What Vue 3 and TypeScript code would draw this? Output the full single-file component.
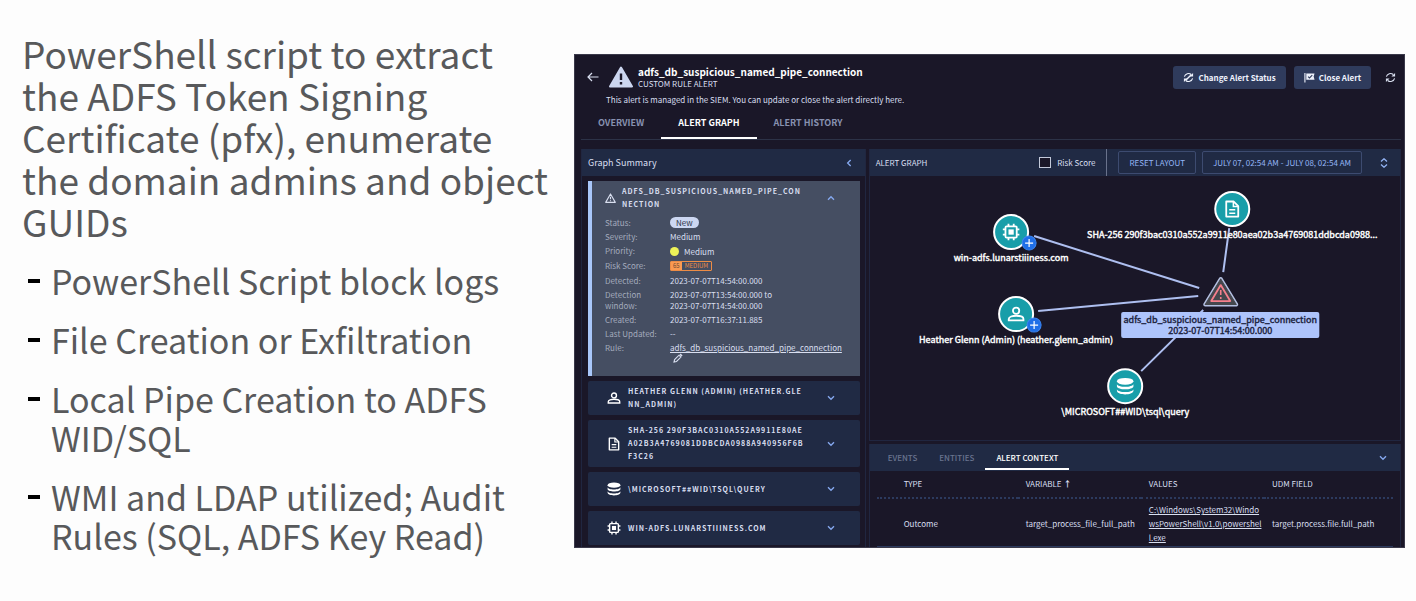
<script setup lang="ts">
import { ref } from 'vue'

type IconName = 'person' | 'doc' | 'db' | 'chip'

interface Detail {
  label: string
  value: string
  kind?: 'pill' | 'dot' | 'risk' | 'link'
}

interface Entity {
  icon: IconName
  title: string
}

interface GraphNode {
  icon: IconName
  x: number
  y: number
  label: string
  expandable: boolean
}

const bullets: string[] = [
  'PowerShell Script block logs',
  'File Creation or Exfiltration',
  'Local Pipe Creation to ADFS WID/SQL',
  'WMI and LDAP utilized; Audit Rules (SQL, ADFS Key Read)',
]

const tabs: string[] = ['OVERVIEW', 'ALERT GRAPH', 'ALERT HISTORY']
const contextTabs: string[] = ['EVENTS', 'ENTITIES', 'ALERT CONTEXT']
const activeTab = ref('ALERT GRAPH')
const activeContext = ref('ALERT CONTEXT')
const showRisk = ref(false)

const details: Detail[] = [
  { label: 'Status:', value: 'New', kind: 'pill' },
  { label: 'Severity:', value: 'Medium' },
  { label: 'Priority:', value: 'Medium', kind: 'dot' },
  { label: 'Risk Score:', value: 'MEDIUM', kind: 'risk' },
  { label: 'Detected:', value: '2023-07-07T14:54:00.000' },
  { label: 'Detection window:', value: '2023-07-07T13:54:00.000 to\n2023-07-07T14:54:00.000' },
  { label: 'Created:', value: '2023-07-07T16:37:11.885' },
  { label: 'Last Updated:', value: '--' },
  { label: 'Rule:', value: 'adfs_db_suspicious_named_pipe_connection', kind: 'link' },
]

const entities: Entity[] = [
  { icon: 'person', title: 'HEATHER GLENN (ADMIN) (HEATHER.GLENN_ADMIN)' },
  { icon: 'doc', title: 'SHA-256 290F3BAC0310A552A9911E80AEA02B3A4769081DDBCDA0988A940956F6BF3C26' },
  { icon: 'db', title: '\\MICROSOFT##WID\\TSQL\\QUERY' },
  { icon: 'chip', title: 'WIN-ADFS.LUNARSTIIINESS.COM' },
]

const nodes: GraphNode[] = [
  { icon: 'chip', x: 142, y: 56, label: 'win-adfs.lunarstiiiness.com', expandable: true },
  { icon: 'person', x: 147, y: 138, label: 'Heather Glenn (Admin) (heather.glenn_admin)', expandable: true },
  { icon: 'db', x: 256, y: 210, label: '\\MICROSOFT##WID\\tsql\\query', expandable: false },
  { icon: 'doc', x: 363, y: 33, label: 'SHA-256 290f3bac0310a552a9911e80aea02b3a4769081ddbcda0988...', expandable: false },
]
</script>

<template>
  <main class="slide">
    <section class="notes">
      <h1>PowerShell script to extract the ADFS Token Signing Certificate (pfx), enumerate the domain admins and object GUIDs</h1>
      <ul>
        <li v-for="b in bullets" :key="b">{{ b }}</li>
      </ul>
    </section>

    <section class="app">
      <svg class="defs" aria-hidden="true">
        <symbol id="i-person" viewBox="0 0 24 24">
          <circle cx="12" cy="7.5" r="4.2" fill="none" stroke="currentColor" stroke-width="2.4" />
          <path d="M2.2 20.5v-2c0-3 5-4.3 9.8-4.3s9.8 1.3 9.8 4.3v2z" fill="none" stroke="currentColor" stroke-width="2.4" />
        </symbol>
        <symbol id="i-doc" viewBox="0 0 24 24">
          <path d="M4 2h10l6 6v14H4z" fill="none" stroke="currentColor" stroke-width="2.4" stroke-linejoin="round" />
          <path d="M13.5 2v6.5H20M8 13h8M8 17.5h8" fill="none" stroke="currentColor" stroke-width="2" />
        </symbol>
        <symbol id="i-db" viewBox="0 0 24 24">
          <ellipse cx="12" cy="5.5" rx="11" ry="4.5" fill="currentColor" />
          <path d="M1 9c1 5 21 5 22 0v3.5c-1 5-21 5-22 0z" fill="currentColor" />
          <path d="M1 16c1 5 21 5 22 0v2.5c-1 6-21 6-22 0z" fill="currentColor" />
        </symbol>
        <symbol id="i-chip" viewBox="0 0 24 24">
          <rect x="4.5" y="4.5" width="15" height="15" rx="1.5" fill="none" stroke="currentColor" stroke-width="2.4" />
          <rect x="8.5" y="8.5" width="7" height="7" fill="currentColor" />
          <path d="M8.5 1v3M15.5 1v3M8.5 20v3M15.5 20v3M1 8.5h3M1 15.5h3M20 8.5h3M20 15.5h3" stroke="currentColor" stroke-width="2.4" />
        </symbol>
        <symbol id="i-refresh" viewBox="0 0 24 24">
          <path d="M3 10a9.3 9.3 0 0 1 15-4.500M21 14a9.3 9.3 0 0 1-15 4.500" fill="none" stroke="currentColor" stroke-width="2.4" />
          <path d="M22 2v8h-8zM2 22v-8h8z" fill="currentColor" />
        </symbol>
        <symbol id="i-chev" viewBox="0 0 12 12">
          <path d="M1.5 3.5 6 8l4.500-4.500" fill="none" stroke="currentColor" stroke-width="2" />
        </symbol>
      </svg>

      <header class="top">
        <button class="bare back" type="button" aria-label="Back">
          <svg viewBox="0 0 12 10"><path d="M11.5 5H1M5 1 1 5l4 4" fill="none" stroke="currentColor" stroke-width="1.2" /></svg>
        </button>
        <svg class="warn" viewBox="0 0 24 22">
          <path d="M12 1.5 23 20.5H1z" fill="#ccd6f0" stroke="#ccd6f0" stroke-width="2" stroke-linejoin="round" />
          <path d="M12 7.5v6.5M12 16v2.4" stroke="#1a1728" stroke-width="2.4" />
        </svg>
        <div class="names">
          <h2>adfs_db_suspicious_named_pipe_connection</h2>
          <p>CUSTOM RULE ALERT</p>
        </div>
        <div class="actions">
          <button class="solid" type="button"><svg viewBox="0 0 24 24"><use href="#i-refresh" /><path d="M6 18 18 6" stroke="currentColor" stroke-width="3" /></svg>Change Alert Status</button>
          <button class="solid" type="button">
            <svg viewBox="0 0 24 24"><path d="M2 2v21" stroke="currentColor" stroke-width="2.4" /><path d="M5 3h18l-2 7 2 7H5z" fill="currentColor" /><path d="m9 10 3 3 6-6" fill="none" stroke="#2f3b5c" stroke-width="2.4" /></svg>Close Alert
          </button>
          <button class="bare reload" type="button" aria-label="Refresh"><svg viewBox="0 0 24 24"><use href="#i-refresh" /></svg></button>
        </div>
      </header>
      <p class="hint">This alert is managed in the SIEM. You can update or close the alert directly here.</p>

      <nav class="tabs">
        <button v-for="t in tabs" :key="t" type="button" :class="{ on: t === activeTab }" @click="activeTab = t">{{ t }}</button>
      </nav>

      <div class="body">
        <aside class="summary">
          <div class="bar">
            <h3>Graph Summary</h3>
            <button class="bare chev left" type="button" aria-label="Collapse summary"><svg viewBox="0 0 12 12"><use href="#i-chev" /></svg></button>
          </div>
          <div class="cards">
            <article class="card open">
              <div class="card-head">
                <svg class="tri" viewBox="0 0 12 11"><path d="M6 1 11.3 10.3H.7z" fill="none" stroke="currentColor" stroke-width="1.2" stroke-linejoin="round" /><path d="M6 4v3M6 8v1.2" stroke="currentColor" stroke-width="1.2" /></svg>
                <h4>ADFS_DB_SUSPICIOUS_NAMED_PIPE_CONNECTION</h4>
                <button class="bare chev up" type="button" aria-label="Collapse"><svg viewBox="0 0 12 12"><use href="#i-chev" /></svg></button>
              </div>
              <dl>
                <template v-for="d in details" :key="d.label">
                  <dt>{{ d.label }}</dt>
                  <dd>
                    <span v-if="d.kind === 'pill'" class="pill">{{ d.value }}</span>
                    <span v-else-if="d.kind === 'dot'" class="prio"><i></i>{{ d.value }}</span>
                    <span v-else-if="d.kind === 'risk'" class="risk"><b>65</b><span>{{ d.value }}</span></span>
                    <template v-else-if="d.kind === 'link'">
                      <a href="#">{{ d.value }}</a>
                      <svg class="pencil" viewBox="0 0 10 10"><path d="M1 9l.6-2.500L6 2.200l1.900 1.900-4.400 4.400z" fill="none" stroke="currentColor" stroke-width="1.1" /><path d="M6.5 1.7 7.7.5l1.900 1.900-1.200 1.200z" fill="currentColor" /></svg>
                    </template>
                    <span v-else class="plain">{{ d.value }}</span>
                  </dd>
                </template>
              </dl>
            </article>
            <article v-for="e in entities" :key="e.title" class="card">
              <div class="card-head">
                <svg class="ent" viewBox="0 0 24 24"><use :href="'#i-' + e.icon" /></svg>
                <h4>{{ e.title }}</h4>
                <button class="bare chev" type="button" aria-label="Expand"><svg viewBox="0 0 12 12"><use href="#i-chev" /></svg></button>
              </div>
            </article>
          </div>
        </aside>

        <div class="main">
          <section class="graph">
            <div class="bar">
              <h3 class="caps">ALERT GRAPH</h3>
              <label class="check"><input v-model="showRisk" type="checkbox" />Risk Score</label>
              <div class="tools">
                <button class="line" type="button">RESET LAYOUT</button>
                <button class="line" type="button">JULY 07, 02:54 AM - JULY 08, 02:54 AM</button>
                <button class="bare updown" type="button" aria-label="Resize"><svg viewBox="0 0 8 10"><path d="M1 3.5 4 .8l3 2.700M1 6.500l3 2.700 3-2.700" fill="none" stroke="currentColor" stroke-width="1.3" /></svg></button>
              </div>
            </div>
            <svg class="canvas" viewBox="1 0 530 264" role="img" aria-label="Alert graph">
              <g stroke="#aebff0" stroke-width="2">
                <path d="M165 60 330 112M169 135 329 120M360 52 354 96M334 134 272 195" />
              </g>
              <g v-for="n in nodes" :key="n.label">
                <circle :cx="n.x" :cy="n.y" r="17" fill="#189ea9" stroke="#fff" stroke-width="2" />
                <svg :x="n.x - 9" :y="n.y - 9" width="18" height="18" color="#fff"><use :href="'#i-' + n.icon" /></svg>
                <g v-if="n.expandable">
                  <circle :cx="n.x + 18" :cy="n.y + 11" r="7" fill="#1f6fe8" stroke="#3c84f0" />
                  <path :d="`M${n.x + 14} ${n.y + 11}h8M${n.x + 18} ${n.y + 7}v8`" stroke="#fff" stroke-width="1.2" />
                </g>
                <text :x="n.x" :y="n.y + 29">{{ n.label }}</text>
              </g>
              <path d="M351.5 103 367 128.5H336z" fill="#45474d" stroke="#b4c0e2" stroke-width="4" stroke-linejoin="round" />
              <path d="M351.5 103 367 128.5H336z" fill="#45474d" stroke="#45474d" stroke-width="1" stroke-linejoin="round" />
              <path d="M351.5 109 361 125H342z" fill="none" stroke="#f57f8c" stroke-width="1.8" stroke-linejoin="round" />
              <path d="M351.5 114v5M351.5 121v2" stroke="#f57f8c" stroke-width="1.6" />
              <rect x="252" y="136" width="198" height="26" rx="2" fill="#aec4fb" />
              <text class="dark" x="351" y="147">adfs_db_suspicious_named_pipe_connection</text>
              <text class="dark" x="351" y="158">2023-07-07T14:54:00.000</text>
            </svg>
          </section>

          <section class="context">
            <div class="bar">
              <nav class="subtabs">
                <button v-for="t in contextTabs" :key="t" type="button" :class="{ on: t === activeContext }" @click="activeContext = t">{{ t }}</button>
              </nav>
              <button class="bare chev" type="button" aria-label="Collapse context"><svg viewBox="0 0 12 12"><use href="#i-chev" /></svg></button>
            </div>
            <table>
              <thead>
                <tr><th>TYPE</th><th>VARIABLE <b>↑</b></th><th>VALUES</th><th>UDM FIELD</th></tr>
              </thead>
              <tbody>
                <tr>
                  <td>Outcome</td>
                  <td>target_process_file_full_path</td>
                  <td><a href="#">C:\Windows\System32\WindowsPowerShell\v1.0\powershell.exe</a></td>
                  <td>target.process.file.full_path</td>
                </tr>
              </tbody>
            </table>
          </section>
        </div>
      </div>
    </section>
  </main>
</template>

<style>
body {
  background: #fdfdfd;
}
</style>

<style scoped>
* {
  box-sizing: border-box;
  margin: 0;
  padding: 0;
}
.slide {
  display: grid;
  grid-template-columns: 574fr 831fr;
  align-items: start;
  padding-right: 11px;
  font-family: "Noto Sans CJK SC", "Noto Sans", sans-serif;
}
.notes {
  padding: 32px 20px 0 22px;
  color: #58595b;
}
h1 {
  font-size: 37px;
  line-height: 42px;
  font-weight: 400;
}
.notes ul {
  list-style: none;
  margin-top: 19px;
  padding-left: 29px;
}
.notes li {
  position: relative;
  font-size: 34px;
  line-height: 39px;
  margin-bottom: 20px;
}
.notes li::before {
  content: "";
  position: absolute;
  left: -23px;
  top: 18px;
  width: 12px;
  height: 4px;
  background: #000;
}
.app {
  margin-top: 54px;
  background: #1a1728;
  color: #d9dff0;
  border: 1px solid #3a394a;
  overflow: hidden;
  padding: 0 3px 0 6px;
  font-size: 8px;
  line-height: 11px;
}
.defs {
  position: absolute;
  width: 0;
  height: 0;
}
button {
  font: inherit;
  color: inherit;
  border: 0;
  background: none;
  cursor: pointer;
  white-space: nowrap;
}
svg {
  display: block;
  flex: none;
}
.top {
  display: flex;
  align-items: center;
  height: 24px;
  margin-top: 10px;
  padding-left: 6px;
}
.back {
  width: 12px;
  margin-right: 10px;
}
.warn {
  width: 24px;
  height: 22px;
  margin-right: 5px;
}
.names h2 {
  font-size: 10px;
  line-height: 14px;
  font-weight: 700;
  color: #fff;
}
.names p {
  line-height: 10px;
}
.actions {
  display: flex;
  align-items: center;
  gap: 8px;
  margin-left: auto;
  padding-right: 5px;
}
.solid {
  display: flex;
  align-items: center;
  gap: 4px;
  height: 23px;
  padding: 0 10px;
  border-radius: 3px;
  background: #2f3b5c;
  color: #eef2fc;
  font-weight: 700;
}
.solid svg,
.reload svg {
  width: 11px;
  height: 11px;
}
.reload {
  margin-left: 6px;
}
.hint {
  margin: 5px 0 0 25px;
  line-height: 12px;
}
.tabs {
  display: flex;
  height: 34px;
  border-bottom: 1px solid #2c3247;
}
.tabs button {
  padding: 2px 17px 0;
  font-size: 9px;
  font-weight: 700;
  color: #8791b0;
  border-bottom: 2px solid transparent;
}
.tabs button.on,
.subtabs button.on {
  color: #fff;
  border-color: #fff;
}
.body {
  display: grid;
  grid-template-columns: 285fr 533fr;
  gap: 3px;
  margin-top: 9px;
}
.bar {
  display: flex;
  align-items: center;
  height: 27px;
  background: #202a44;
}
.bar h3 {
  font-size: 9px;
  font-weight: 400;
  padding-left: 6px;
}
.bar h3.caps {
  font-size: 8px;
}
.chev {
  color: #86a9f0;
  width: 8px;
  height: 8px;
}
.chev svg {
  width: 8px;
  height: 8px;
}
.left {
  margin-left: auto;
  margin-right: 12px;
  transform: rotate(90deg);
}
.up {
  transform: rotate(180deg);
}
.summary,
.main {
  min-width: 0;
}
.summary {
  border: solid #202640;
  border-width: 0 1px;
}
.cards {
  display: flex;
  flex-direction: column;
  gap: 5px;
  padding: 5px 5px 1px 6px;
}
.card {
  background: #202a44;
  border-radius: 2px;
  padding: 4px 25px 4px 19px;
}
.card-head {
  display: flex;
  align-items: center;
  min-height: 26px;
}
.card h4 {
  flex: 1;
  min-width: 0;
  font-size: 7px;
  line-height: 13px;
  font-weight: 700;
  letter-spacing: 1px;
  word-break: break-all;
  margin-right: 20px;
}
.ent {
  width: 14px;
  height: 14px;
  margin-right: 7px;
  color: #fff;
}
.open {
  background: #454e62;
  border-left: 4px solid #a9c7fa;
  border-radius: 0;
  padding: 4px 25px 13px 13px;
}
.tri {
  width: 11px;
  height: 10px;
  margin-right: 6px;
}
dl {
  display: grid;
  grid-template-columns: 52px 1fr;
  column-gap: 13px;
  row-gap: 3px;
  margin-top: 6px;
}
dt {
  color: #a4abbd;
}
dd {
  min-width: 0;
}
.plain {
  white-space: pre;
}
.pill {
  display: inline-block;
  background: #ccd7f2;
  color: #2c3448;
  border-radius: 6px;
  padding: 0 6px;
}
.prio {
  display: flex;
  align-items: center;
  gap: 5px;
  height: 12px;
}
.prio i {
  width: 9px;
  height: 9px;
  border-radius: 50%;
  background: #edf258;
}
.risk {
  display: flex;
  width: fit-content;
  margin: 1px 0;
  border: 1px solid #ec8c46;
  border-radius: 1px;
  font-size: 6px;
  line-height: 8px;
  color: #ec8c46;
}
.risk b {
  background: #fb9a52;
  color: #704a34;
  font-weight: 400;
  padding: 0 2px;
}
.risk span {
  padding: 0 3px;
}
.pencil {
  width: 10px;
  height: 10px;
  margin-left: 3px;
}
a {
  color: inherit;
  text-decoration: underline;
}
.check {
  display: flex;
  align-items: center;
  gap: 6px;
  margin-left: auto;
  padding-right: 11px;
}
.check input {
  appearance: none;
  width: 12px;
  height: 11px;
  border: 1px solid #c3c9da;
  background: #1a1728;
}
.tools {
  display: flex;
  align-items: center;
  align-self: stretch;
  gap: 6px;
  border-left: 1px solid #69728c;
  padding: 0 12px 0 11px;
}
.line {
  height: 23px;
  padding: 0 10px;
  border: 1px solid #3d4b70;
  border-radius: 2px;
  color: #94b5f6;
}
.updown {
  margin-left: 12px;
  color: #94b5f6;
}
.updown svg {
  width: 8px;
  height: 10px;
}
.graph,
.context {
  border: 1px solid #202640;
  border-top: 0;
}
.canvas {
  width: 100%;
}
.canvas text {
  font-size: 9px;
  font-weight: 400;
  text-anchor: middle;
  fill: #fff;
  stroke: #fff;
  stroke-width: 0.4px;
}
.canvas text.dark {
  fill: #1c2340;
  stroke: #1c2340;
}
.context {
  margin-top: 3px;
  border-bottom: 0;
}
.context .chev {
  margin-left: auto;
  margin-right: 13px;
}
.subtabs {
  display: flex;
  align-self: stretch;
  margin-left: 7px;
}
.subtabs button {
  padding: 3px 11px 0;
  margin-bottom: 1px;
  font-weight: 500;
  color: #69748f;
  border-bottom: 2px solid transparent;
}
table {
  width: calc(100% - 14px);
  margin: 0 7px;
  table-layout: fixed;
  border-collapse: collapse;
  line-height: 14px;
}
th,
td {
  text-align: left;
  font-weight: 400;
  padding: 0 0 0 8px;
  word-break: break-all;
}
th:first-child,
td:first-child {
  padding-left: 27px;
}
th:first-child {
  width: 141px;
}
th:last-child {
  width: 25%;
}
th {
  height: 27px;
  border-bottom: 2px dotted #2c3a5e;
}
td {
  padding-top: 4px;
  padding-bottom: 1px;
  border-bottom: 1px solid #2c3a5e;
}
</style>
